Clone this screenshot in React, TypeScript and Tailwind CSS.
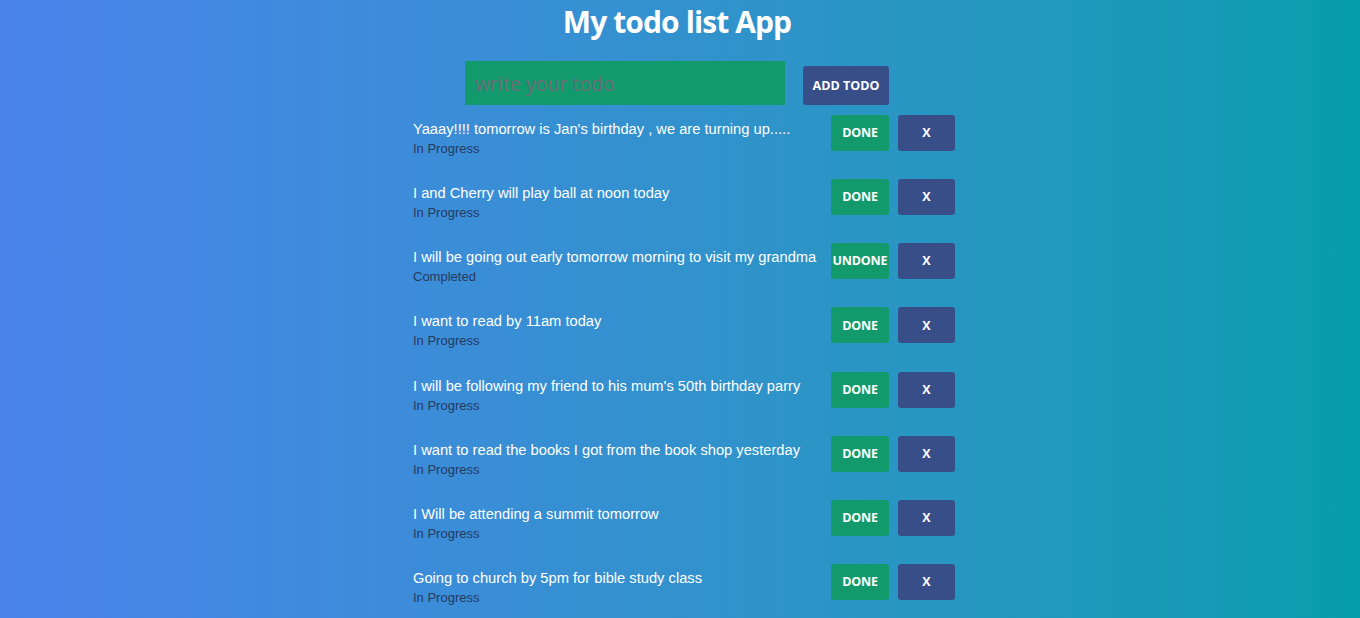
import React from "react";

const todos = [
  { text: "Yaaay!!!! tomorrow is Jan's birthday , we are turning up.....", done: false },
  { text: "I and Cherry will play ball at noon today", done: false },
  { text: "I will be going out early tomorrow morning to visit my grandma", done: true },
  { text: "I want to read by 11am today", done: false },
  { text: "I will be following my friend to his mum's 50th birthday parry", done: false },
  { text: "I want to read the books I got from the book shop yesterday", done: false },
  { text: "I Will be attending a summit tomorrow", done: false },
  { text: "Going to church by 5pm for bible study class", done: false },
];

export default function App() {
  return (
    <div className="w-full h-[618px] overflow-hidden bg-gradient-to-r from-[#4983eb] to-[#049dae] flex flex-col items-center">
      <h1 className="mt-[2px] mr-[6px] text-[30px] leading-[40px] font-bold text-white tracking-[-0.9px] [font-family:'Open_Sans',sans-serif]">
        My todo list App
      </h1>
      <div className="mt-[19px] mr-[6px] flex items-end gap-[18px]">
        <input
          placeholder="write your todo"
          className="w-[320px] h-[44px] bg-[#129a6c] px-[10px] text-[19.5px] text-white outline-none placeholder:text-[#6e6a78] [font-family:'Open_Sans',sans-serif] font-normal"
        />
        <button className="w-[86px] h-[39px] pt-[1px] rounded-[3px] bg-[#384e88] text-white text-[12.5px] font-bold [font-family:'Open_Sans',sans-serif]">
          ADD TODO
        </button>
      </div>
      <div className="mt-[10px] ml-[8px] w-[542px] flex flex-col">
        {todos.map((t, i) => (
          <div key={i} className="h-[64.15px] flex justify-between items-start">
            <div className="pt-[5px] [font-family:'Liberation_Sans',Arial,sans-serif]">
              <div className="text-[14.7px] leading-[18px] text-white">{t.text}</div>
              <div className="mt-[2px] text-[13px] leading-[18px] text-[#26395e]">
                {t.done ? "Completed" : "In Progress"}
              </div>
            </div>
            <div className="flex gap-[9px]">
              <button className="w-[58px] h-[36px] pt-[1px] rounded-[3px] bg-[#129a6c] text-white text-[12.5px] font-bold [font-family:'Open_Sans',sans-serif] tracking-[-0.2px]">
                {t.done ? "UNDONE" : "DONE"}
              </button>
              <button className="w-[57px] h-[36px] pt-[1px] rounded-[3px] bg-[#384e88] text-white text-[12.5px] font-bold [font-family:'Open_Sans',sans-serif]">
                X
              </button>
            </div>
          </div>
        ))}
      </div>
    </div>
  );
}
